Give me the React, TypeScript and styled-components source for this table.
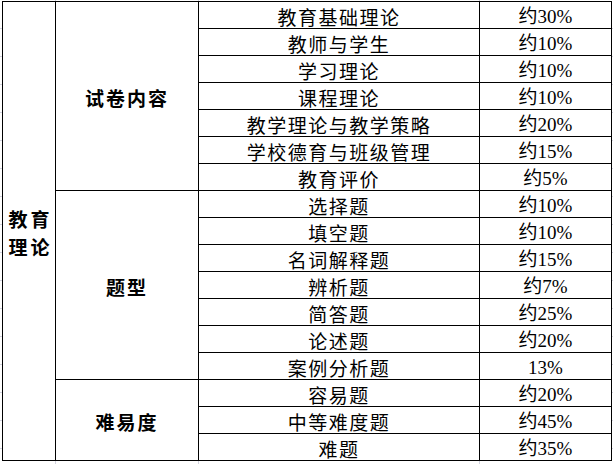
import React from 'react';
import styled, { createGlobalStyle } from 'styled-components';

const GlobalStyle = createGlobalStyle`
  html, body {
    margin: 0;
    padding: 0;
    background: #ffffff;
  }
`;

// faint spreadsheet gridlines that peek out around the table
const Sheet = styled.div`
  width: 613px;
  height: 464px;
  box-sizing: border-box;
  padding: 1px 0 0 2px;
  background-color: #ffffff;
  background-image:
    repeating-linear-gradient(to bottom, transparent 0 27px, #d3d3df 27px 28px),
    linear-gradient(to right, transparent 55px, #d3d3df 55px 56px, transparent 56px),
    linear-gradient(to right, transparent 198px, #d3d3df 198px 199px, transparent 199px),
    linear-gradient(to right, transparent 479px, #d3d3df 479px 480px, transparent 480px);
  background-position: 0 1px, 0 0, 0 0, 0 0;
  background-repeat: repeat;
`;

const Grid = styled.div`
  display: grid;
  grid-template-columns: 52px 142px 280px 131px;
  grid-auto-rows: 26px;
  gap: 1px;
  padding: 1px;
  width: max-content;
  background: #000000;
`;

const Cell = styled.div<{ rows?: number; bold?: boolean; num?: boolean }>`
  grid-row: span ${({ rows }) => rows || 1};
  background: #ffffff;
  display: flex;
  align-items: center;
  justify-content: center;
  text-align: center;
  box-sizing: border-box;
  padding-top: 3px;
  color: #000000;
  font-family: ${({ num }) =>
    num ? '"Liberation Serif", "Noto Sans CJK SC", serif' : '"Noto Sans CJK SC", sans-serif'};
  font-size: 19px;
  font-weight: ${({ bold }) => (bold ? 700 : 400)};
  letter-spacing: ${({ bold, num }) => (bold ? '2px' : num ? '0' : '1.5px')};
  line-height: 28px;
  white-space: nowrap;
`;

const SideCell = styled(Cell)`
  padding: 4px 0 0 3px;
  letter-spacing: 3px;
`;

type Item = { name: string; pct: string };

const groups: { title: string; items: Item[] }[] = [
  {
    title: '试卷内容',
    items: [
      { name: '教育基础理论', pct: '约30%' },
      { name: '教师与学生', pct: '约10%' },
      { name: '学习理论', pct: '约10%' },
      { name: '课程理论', pct: '约10%' },
      { name: '教学理论与教学策略', pct: '约20%' },
      { name: '学校德育与班级管理', pct: '约15%' },
      { name: '教育评价', pct: '约5%' },
    ],
  },
  {
    title: '题型',
    items: [
      { name: '选择题', pct: '约10%' },
      { name: '填空题', pct: '约10%' },
      { name: '名词解释题', pct: '约15%' },
      { name: '辨析题', pct: '约7%' },
      { name: '简答题', pct: '约25%' },
      { name: '论述题', pct: '约20%' },
      { name: '案例分析题', pct: '13%' },
    ],
  },
  {
    title: '难易度',
    items: [
      { name: '容易题', pct: '约20%' },
      { name: '中等难度题', pct: '约45%' },
      { name: '难题', pct: '约35%' },
    ],
  },
];

const totalRows = groups.reduce((n, g) => n + g.items.length, 0);

export default function App() {
  return (
    <>
      <GlobalStyle />
      <Sheet>
        <Grid>
          <SideCell rows={totalRows} bold>
            教育
            <br />
            理论
          </SideCell>
          {groups.map((g) => (
            <React.Fragment key={g.title}>
              <Cell rows={g.items.length} bold style={{ gridColumn: 2 }}>
                {g.title}
              </Cell>
              {g.items.map((it) => (
                <React.Fragment key={it.name}>
                  <Cell style={{ gridColumn: 3 }}>{it.name}</Cell>
                  <Cell num style={{ gridColumn: 4 }}>{it.pct}</Cell>
                </React.Fragment>
              ))}
            </React.Fragment>
          ))}
        </Grid>
      </Sheet>
    </>
  );
}
